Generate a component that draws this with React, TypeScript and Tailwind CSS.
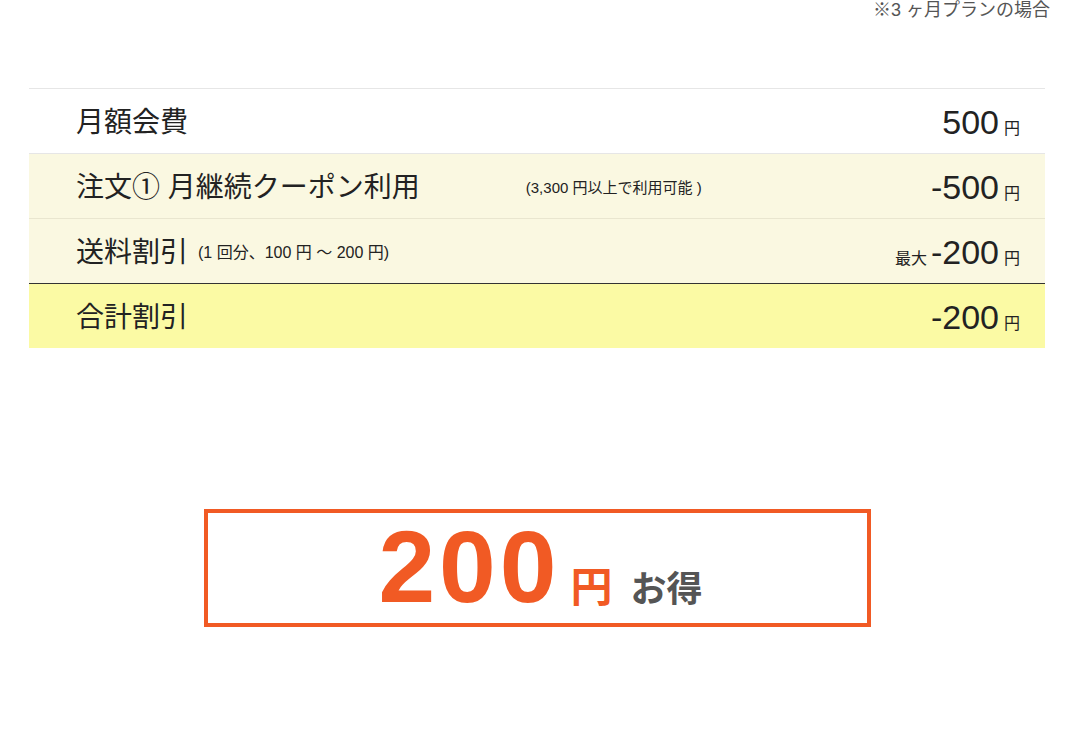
import React from "react";

interface Row {
  label: string;
  note?: string;
  notePos?: "inline" | "middle";
  prefix?: string;
  amount: string;
  bg: string;
  border: string;
}

const rows: Row[] = [
  { label: "月額会費", amount: "500", bg: "bg-white", border: "border-t border-[#e6e6e6]" },
  {
    label: "注文① 月継続クーポン利用",
    note: "(3,300 円以上で利用可能 )",
    notePos: "middle",
    amount: "-500",
    bg: "bg-[#faf8e1]",
    border: "border-t border-[#e6e6e6]",
  },
  {
    label: "送料割引",
    note: "(1 回分、100 円 ～ 200 円)",
    notePos: "inline",
    prefix: "最大",
    amount: "-200",
    bg: "bg-[#faf8e1]",
    border: "border-t border-[#e9e6cf]",
  },
  { label: "合計割引", amount: "-200", bg: "bg-[#fbfaa4]", border: "border-t border-[#333]" },
];

const font = { fontFamily: '"Liberation Sans", "Noto Sans CJK JP", sans-serif' };

export default function App() {
  return (
    <div className="w-[1075px] h-[738px] bg-white text-[#222]" style={font}>
      {/* NOTE */}
      <div className="flex justify-end pr-[25px] text-[18px] leading-[20px] text-[#555]">
        ※3 ヶ月プランの場合
      </div>

      {/* TABLE */}
      <div className="mx-[29px] mt-[68px] w-[1016px]">
        {rows.map((r) => (
          <div
            key={r.label}
            className={`flex items-center h-[65px] pl-[47px] pr-[25px] pt-[3px] ${r.bg} ${r.border}`}
          >
            <div className="flex items-center flex-1">
              <span className="text-[28px] leading-none">{r.label}</span>
              {r.note && r.notePos === "inline" && (
                <span className="ml-[10px] text-[16px] leading-none">{r.note}</span>
              )}
              {r.note && r.notePos === "middle" && (
                <span className="ml-[106px] text-[15px] leading-none">{r.note}</span>
              )}
            </div>
            <div className="flex items-baseline">
              {r.prefix && <span className="text-[16px] mr-[4px]">{r.prefix}</span>}
              <span className="text-[34px] leading-none">{r.amount}</span>
              <span className="ml-[5px] text-[16px]">円</span>
            </div>
          </div>
        ))}
      </div>

      {/* RESULT */}
      <div className="flex justify-center mt-[161px]">
        <div className="flex items-baseline justify-center w-[667px] h-[118px] border-[4px] border-[#f15a24] pt-[2px] pl-[6px]">
          <span className="text-[102px] font-bold leading-[104px] text-[#f15a24] tracking-[4px]">200</span>
          <span className="ml-[10px] text-[42px] font-bold text-[#f15a24]">円</span>
          <span className="ml-[18px] text-[36px] font-bold text-[#555]">お得</span>
        </div>
      </div>
    </div>
  );
}
